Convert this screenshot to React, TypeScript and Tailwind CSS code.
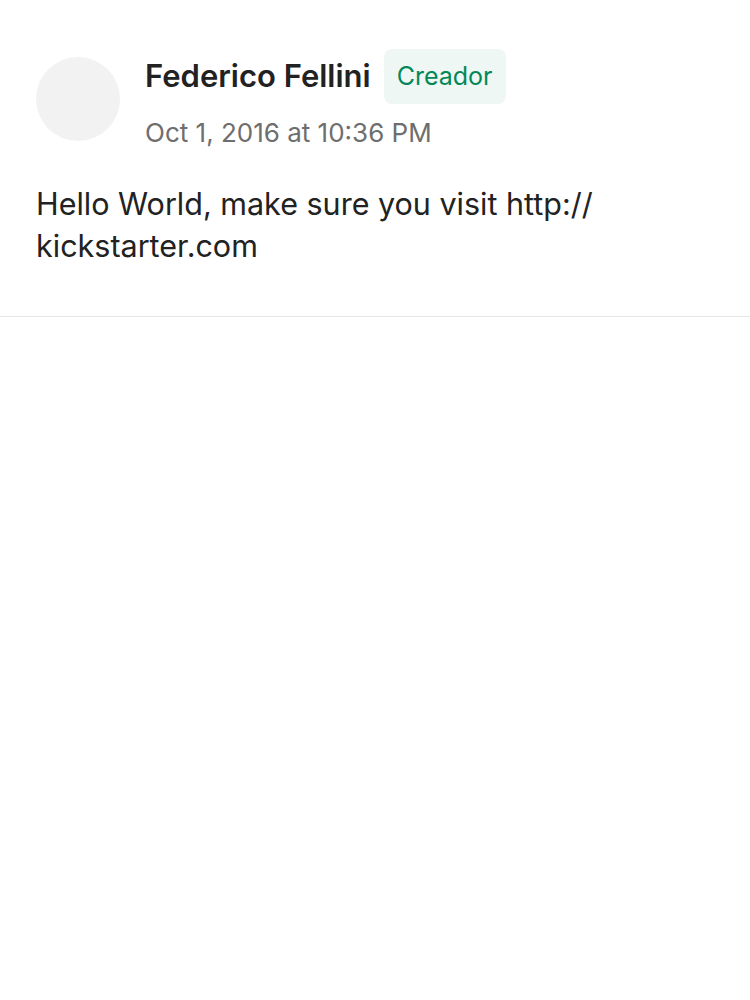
import React from "react";

const Comment: React.FC = () => {
  return (
    <section className="border-b border-[#e6e6e6] px-9 pt-[49px] pb-[49px]">
      <div className="flex flex-row items-start">
        <div className="mt-[8px] h-[84px] w-[84px] shrink-0 rounded-full bg-[#f2f2f2]" />
        <div className="ml-[25px] flex flex-col">
          <div className="flex flex-row items-center">
            <span className="text-[31px] font-semibold text-[#222222]">Federico Fellini</span>
            <span className="ml-[13px] rounded-lg bg-[#eef7f3] px-[13px] py-[10px] text-[25px] leading-[35px] text-[#028858]">
              Creador
            </span>
          </div>
          <span className="mt-[13px] text-[26px] leading-[32px] text-[#6e6e6e]">Oct 1, 2016 at 10:36 PM</span>
        </div>
      </div>

      <p className="mt-[34px] text-[30.5px] leading-[42px] text-[#222222]">
        Hello World, make sure you visit http://<wbr />kickstarter.com
      </p>
    </section>
  );
};

const App: React.FC = () => {
  return (
    <div className="min-h-screen bg-white font-['Inter',sans-serif]">
      <Comment />
    </div>
  );
};

export default App;
